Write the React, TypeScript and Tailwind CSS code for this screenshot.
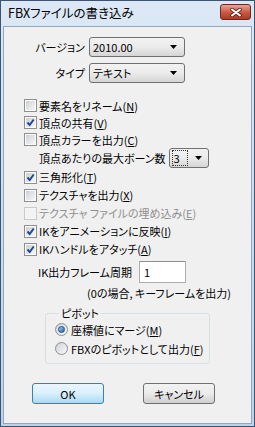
import type { ReactNode } from "react";

const Arrow = () => (
  <svg width="7" height="4" viewBox="0 0 7 4" className="shrink-0">
    <polygon points="0,0 7,0 3.5,4" fill="#000" />
  </svg>
);

const Combo = ({ value, width }: { value: string; width: string }) => (
  <div
    className={`flex h-[20px] ${width} items-center justify-between rounded-[3px] border border-[#707070] bg-gradient-to-b from-[#f2f2f2] via-[#ebebeb] to-[#d5d5d5] pl-[3px] pr-[7px]`}
  >
    <span>{value}</span>
    <Arrow />
  </div>
);

const Box = ({ checked, disabled }: { checked?: boolean; disabled?: boolean }) => (
  <span
    className={`relative flex h-[13px] w-[13px] shrink-0 items-center justify-center border ${
      disabled ? "border-[#c9c9c9] bg-[#f7f7f7]" : "border-[#8e8f8f] bg-white"
    }`}
  >
    <span
      className={`h-[9px] w-[9px] ${
        disabled ? "bg-[#f3f3f3]" : "bg-gradient-to-br from-[#cdd0d4] to-[#f7f7f7]"
      }`}
    />
    {checked && (
      <svg width="11" height="11" viewBox="0 0 11 11" className="absolute left-[0px] top-[0px]">
        <path d="M2.5 5.5 L4.7 8 L8.7 2.5" fill="none" stroke="#21478f" strokeWidth="2" />
      </svg>
    )}
  </span>
);

const Check = ({
  checked,
  disabled,
  tall,
  children,
}: {
  checked?: boolean;
  disabled?: boolean;
  tall?: boolean;
  children: ReactNode;
}) => (
  <div className={`flex ${tall ? "h-[18px]" : "h-[17px]"} items-center gap-[2px] whitespace-nowrap`}>
    <Box checked={checked} disabled={disabled} />
    <span className={disabled ? "text-[#8f8f8f]" : ""}>{children}</span>
  </div>
);

const Radio = ({ on, children }: { on?: boolean; children: ReactNode }) => (
  <div className="flex h-[19px] items-center gap-[3px] whitespace-nowrap">
    <span className="flex h-[13px] w-[13px] shrink-0 items-center justify-center rounded-full border border-[#8e8f8f] bg-gradient-to-br from-[#cfd2d6] to-[#fafafa]">
      {on && (
        <span className="h-[7px] w-[7px] rounded-full border border-[#1c4b8a] bg-gradient-to-br from-[#a8d2f7] to-[#1d5fb3]" />
      )}
    </span>
    <span>{children}</span>
  </div>
);

export default function App() {
  return (
    <div className="flex h-[427px] w-[255px] flex-col border border-[#3d5470] bg-gradient-to-b from-[#dce8f5] to-[#bed3ea] px-[2px] pb-[2px] font-['Noto_Sans_CJK_JP',sans-serif] text-[11px] leading-[14px] text-black [font-feature-settings:'palt']">
      {/* title bar */}
      <div className="flex h-[25px] shrink-0 items-start justify-between pl-[5px] pr-[1px]">
        <span className="pt-[5px] text-[12.5px]">FBXファイルの書き込み</span>
        <div className="mt-[3px] flex h-[16px] w-[31px] items-center justify-center rounded-[3px] border border-[#6e2a20] bg-gradient-to-b from-[#e5a597] via-[#cd5a45] to-[#b2381f]">
          <svg width="12" height="9" viewBox="0 0 12 9">
            <path d="M2 1.5 L10 7.5 M10 1.5 L2 7.5" stroke="#5a231b" strokeWidth="3.6" strokeLinecap="round" />
            <path d="M2 1.5 L10 7.5 M10 1.5 L2 7.5" stroke="#fff" strokeWidth="2" strokeLinecap="round" />
          </svg>
        </div>
      </div>

      {/* client */}
      <div className="flex flex-1 flex-col border border-[#8ea8c4] bg-[#f0f0f0] pt-[10px] whitespace-nowrap">
        <div className="flex items-center">
          <span className="w-[81px] text-right">バージョン</span>
          <div className="ml-[4px]">
            <Combo value="2010.00" width="w-[96px]" />
          </div>
        </div>
        <div className="mt-[6px] flex items-center">
          <span className="w-[81px] text-right">タイプ</span>
          <div className="ml-[4px]">
            <Combo value="テキスト" width="w-[96px]" />
          </div>
        </div>

        <div className="mt-[14px] flex flex-col pl-[20px]">
          <Check>
            要素名をリネーム(<u>N</u>)
          </Check>
          <Check checked>
            頂点の共有(<u>V</u>)
          </Check>
          <Check>
            頂点カラーを出力(<u>C</u>)
          </Check>
          <div className="flex h-[20px] items-center pl-[15px]">
            <span>頂点あたりの最大ボーン数</span>
            <div className="ml-[3px] flex h-[20px] w-[40px] items-center justify-between rounded-[3px] border border-[#707070] bg-gradient-to-b from-[#f2f2f2] via-[#ebebeb] to-[#d5d5d5] pl-[2px] pr-[6px]">
              <span className="flex h-[16px] w-[16px] items-center border border-dotted border-[#333] pl-[1px]">
                3
              </span>
              <Arrow />
            </div>
          </div>
          <Check checked tall>
            三角形化(<u>T</u>)
          </Check>
          <Check tall>
            テクスチャを出力(<u>X</u>)
          </Check>
          <Check disabled tall>
            テクスチャ ファイルの埋め込み(<u>E</u>)
          </Check>
          <Check checked tall>
            IKをアニメーションに反映(<u>I</u>)
          </Check>
          <Check checked tall>
            IKハンドルをアタッチ(<u>A</u>)
          </Check>
        </div>

        <div className="mt-[3px] flex h-[22px] items-center pl-[34px]">
          <span className="w-[101px]">IK出力フレーム周期</span>
          <div className="flex h-[22px] w-[47px] items-center border border-[#abadb3] border-t-[#8e8f8f] bg-white pl-[4px]">
            1
          </div>
        </div>
        <div className="mt-[2px] flex h-[16px] items-center pl-[83px]">(0の場合, キーフレームを出力)</div>

        <fieldset className="ml-[41px] mt-[5px] w-[165px] rounded-[3px] border border-[#d5dfe5] pb-[5px] pl-[9px]">
          <legend className="ml-[4px] px-[2px]">ピボット</legend>
          <Radio on>
            座標値にマージ(<u>M</u>)
          </Radio>
          <Radio>
            FBXのピボットとして出力(<u>F</u>)
          </Radio>
        </fieldset>

        <div className="mt-[19px] flex pl-[28px]">
          <div className="flex h-[21px] w-[72px] items-center justify-center rounded-[3px] border border-[#3c7fb1] bg-gradient-to-b from-[#eaf6fd] via-[#d9f0fc] to-[#a7d9f5]">
            OK
          </div>
          <div className="ml-[39px] flex h-[21px] w-[72px] items-center justify-center rounded-[3px] border border-[#707070] bg-gradient-to-b from-[#f2f2f2] via-[#ebebeb] to-[#cfcfcf]">
            キャンセル
          </div>
        </div>
      </div>
    </div>
  );
}
